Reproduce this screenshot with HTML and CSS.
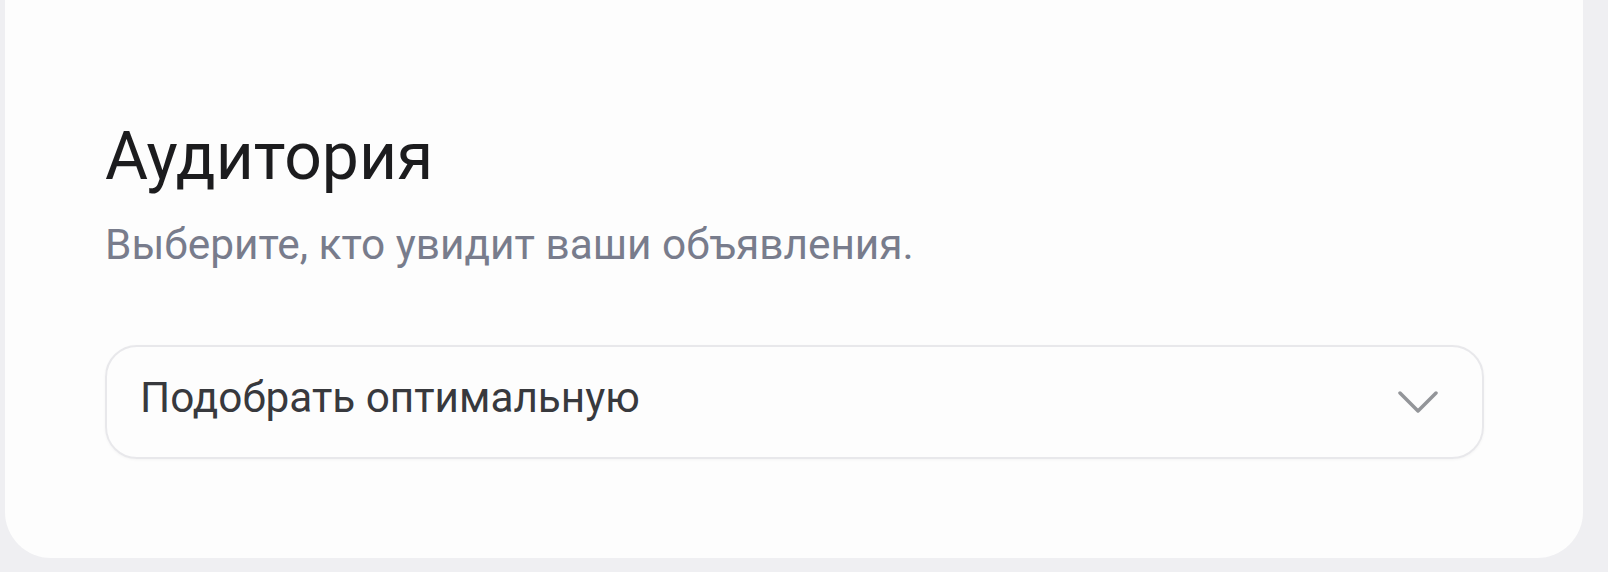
FILE: index.html
```html
<!DOCTYPE html>
<html lang="ru">
<head>
<meta charset="utf-8">
<title>Аудитория</title>
<link rel="stylesheet" href="styles.css">
</head>
<body>
<section class="card">
  <h2 class="title">Аудитория</h2>
  <p class="subtitle">Выберите, кто увидит ваши объявления.</p>
  <div class="select">
    <span class="select-value">Подобрать оптимальную</span>
    <svg class="chevron" width="40" height="24" viewBox="0 0 40 24" aria-hidden="true">
      <polyline points="2,3 20,21 38,3" fill="none" stroke="#939599" stroke-width="3.5" stroke-linecap="round" stroke-linejoin="round"/>
    </svg>
  </div>
</section>
</body>
</html>
```
FILE: styles.css
```css
html, body {
  margin: 0;
  padding: 0;
}
body {
  background: #efeff2;
  font-family: Roboto, "Noto Sans", "Liberation Sans", sans-serif;
  height: 572px;
  overflow: hidden;
}
.card {
  background: #fdfdfd;
  margin: -60px 25px 0 5px;
  border-radius: 46px;
  padding: 179px 99px 99px 100px;
}
.title {
  margin: 0;
  font-size: 66px;
  line-height: 76px;
  font-weight: 400;
  color: #1c1c1e;
}
.subtitle {
  margin: 24px 0 0;
  font-size: 42.4px;
  line-height: 52px;
  color: #787c8c;
}
.select {
  margin-top: 74px;
  height: 114px;
  box-sizing: border-box;
  border: 2px solid #e8e8eb;
  border-radius: 32px;
  box-shadow: 0 1px 3px rgba(0, 0, 0, 0.04);
  display: flex;
  align-items: center;
  justify-content: space-between;
  padding: 0 44px 8px 33px;
}
.select-value {
  font-size: 42.3px;
  line-height: 52px;
  color: #38393d;
}
.chevron {
  display: block;
  margin-top: 8px;
}
```
